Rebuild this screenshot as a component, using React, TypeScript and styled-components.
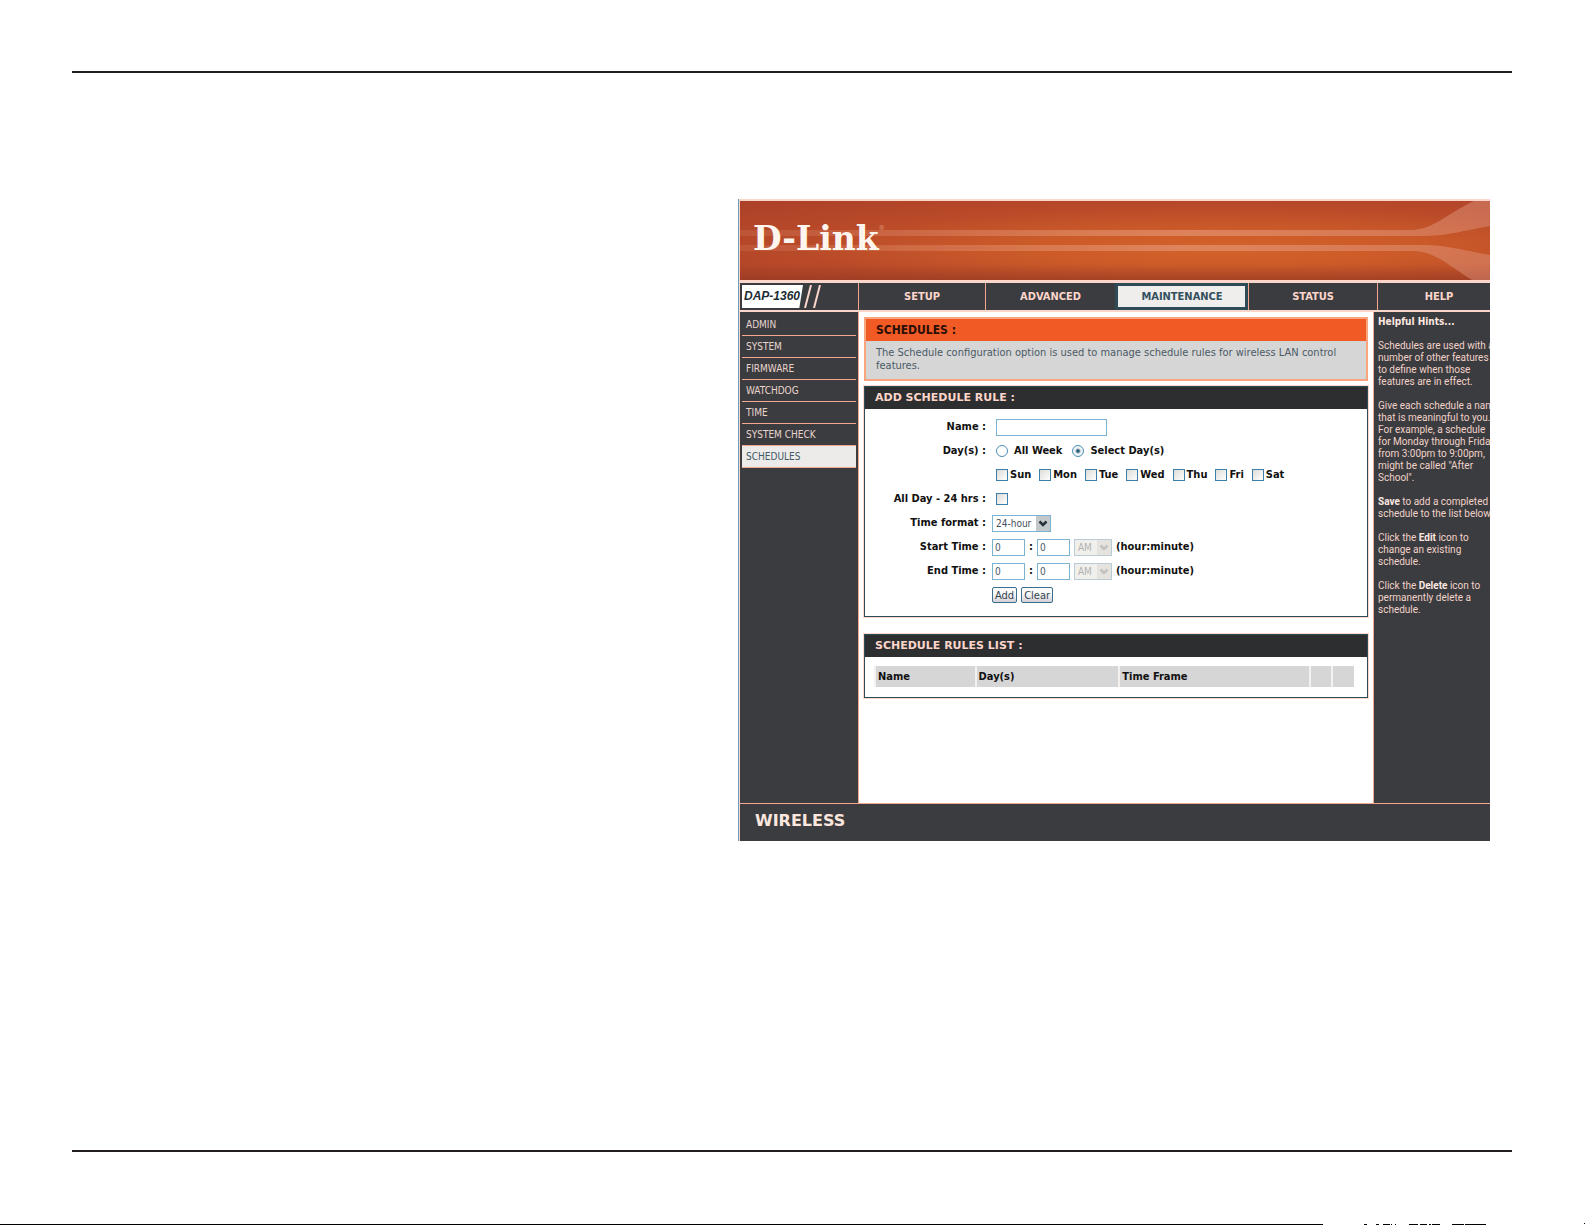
import React, { useState } from "react";
import styled, { createGlobalStyle, css } from "styled-components";

const sans = `"DejaVu Sans Condensed", "DejaVu Sans", Tahoma, sans-serif`;
const wide = `"DejaVu Sans", Verdana, sans-serif`;
const slate = "#3b3c40";
const salmon = "#f4a58f";
const pale = "#fcd6ca";
const teal = "#2d4a57";
const sky = "#79b4d2";

const GlobalStyle = createGlobalStyle`
  *, *::before, *::after { box-sizing: border-box; }
  body { margin: 0; background: #fff; font-family: ${sans}; font-size: 11px; color: #111; }
`;

const Page = styled.div`
  min-height: 100vh;
  display: flex;
  flex-direction: column;
`;

const Sheet = styled.div`
  flex: 1;
  display: flex;
  flex-direction: column;
  margin: 71px 73px 73px 72px;
  border-top: 2px solid #231f20;
  border-bottom: 2px solid #231f20;
`;

const Columns = styled.div`
  display: grid;
  grid-template-columns: 666fr 752fr;
  padding: 126px 22px 0 0;
`;

const Router = styled.div`
  grid-column: 2;
  min-width: 0;
  overflow: hidden;
  border-left: 1px solid #6d9db8;
  background: ${pale};
  padding: 2px 0 0 1px;
`;

const Banner = styled.header`
  position: relative;
  height: 79px;
  display: flex;
  align-items: center;
  padding: 0 0 4px 13px;
  background: radial-gradient(ellipse at 64% 60%, #d3622a 0%, #cb5a29 30%, #b94a29 62%, #ab4029 100%);
`;

const BannerArt = styled.svg`
  position: absolute;
  inset: 0;
  width: 100%;
  height: 100%;
`;

const Logo = styled.div`
  position: relative;
  display: flex;
  font: bold 33px/40px "DejaVu Serif", Georgia, serif;
  color: #fff5ef;
  sup {
    padding-top: 5px;
    font: 7px/8px ${sans};
    color: #e0937a;
  }
`;

const Nav = styled.nav`
  display: grid;
  grid-template-columns: 118px 127fr 130fr 133fr 129fr 113fr;
  margin: 3px 0 2px;
  height: 27px;
  background: ${slate};
  overflow: hidden;
`;

const Model = styled.div`
  display: flex;
  align-items: center;
  padding-left: 2px;
`;

const ModelTag = styled.span`
  height: 23px;
  width: 61px;
  padding-left: 2px;
  background: #fff;
  clip-path: polygon(0 0, 100% 0, 94% 100%, 0 100%);
  color: #1d2c36;
  font: italic bold 12px/23px "Liberation Sans", Arial, sans-serif;
  white-space: nowrap;
`;

const Tab = styled.a<{ $active?: boolean; $clipped?: boolean }>`
  display: flex;
  align-items: center;
  justify-content: center;
  border-left: 1px solid ${salmon};
  color: ${pale};
  font: bold 11px/14px ${sans};
  text-decoration: none;
  ${(p) => p.$clipped && css`padding-left: 10px;`}
  ${(p) =>
    p.$active &&
    css`
      color: #34505f;
      background: #efeeed;
      background-clip: padding-box;
      outline: 3px solid ${teal};
      outline-offset: -3px;
    `}
`;

const Body = styled.div`
  display: grid;
  grid-template-columns: 118px minmax(0, 1fr) 116px;
  min-height: 491px;
  background: #fff;
`;

const Side = styled.ul`
  list-style: none;
  margin: 0;
  padding: 2px;
  background: ${slate};
`;

const SideItem = styled.li<{ $active?: boolean }>`
  height: 22px;
  border-bottom: 1px solid ${salmon};
  background: ${(p) => (p.$active ? "#ecebe9" : "transparent")};
  a {
    display: block;
    padding-left: 4px;
    color: ${(p) => (p.$active ? "#415a68" : "#e9d5ce")};
    font: 10px/21px ${sans};
    text-decoration: none;
  }
`;

const Main = styled.main`
  padding: 5px 5px 0;
  border-left: 1px solid ${salmon};
  border-right: 1px solid ${salmon};
`;

const Intro = styled.section`
  border: 2px solid #f8a57d;
  background: #d6d6d6;
  height: 64px;
  h1 {
    margin: 0;
    padding-left: 10px;
    background: #f15a24;
    color: #2b0f04;
    font: bold 12px/22px ${sans};
  }
  p {
    margin: 0;
    padding: 5px 10px;
    color: #4b5a66;
    font: 11px/13px ${sans};
  }
`;

const Card = styled.section<{ $gap: number }>`
  margin-top: ${(p) => p.$gap}px;
  border: 1px solid ${teal};
  outline: 1px solid ${pale};
  h2 {
    margin: 0;
    padding-left: 10px;
    background: #2d2e30;
    color: ${pale};
    font: bold 11px/22px ${wide};
  }
`;

const Form = styled.form`
  display: grid;
  grid-template-columns: 121px 1fr;
  grid-auto-rows: 24px;
  column-gap: 6px;
  align-items: center;
  padding: 6px 0 9px;
  font: bold 11px/14px ${sans};
`;

const Caption = styled.label`
  grid-column: 1;
  text-align: right;
`;

const Fields = styled.div<{ $inset?: boolean; $gap?: number }>`
  grid-column: 2;
  display: flex;
  align-items: center;
  gap: ${(p) => p.$gap ?? 4}px;
  padding-left: ${(p) => (p.$inset ? 4 : 0)}px;
  white-space: nowrap;
`;

const Choice = styled.label<{ $gap: number }>`
  display: flex;
  align-items: center;
  gap: ${(p) => p.$gap}px;
`;

const TextBox = styled.input<{ $w: number }>`
  width: ${(p) => p.$w}px;
  height: 17px;
  margin: 0;
  padding: 0 2px;
  border: 1px solid ${sky};
  border-radius: 0;
  background: #fff;
  color: #4a5a66;
  font: 10px/15px ${sans};
`;

const Tick = styled.input`
  appearance: none;
  width: 12px;
  height: 12px;
  margin: 0;
  border: 1px solid #3d7fa8;
  background: linear-gradient(135deg, #dcdcd8, #fff);
  &:checked { background: #3d7fa8; }
`;

const Radio = styled.input`
  appearance: none;
  width: 12px;
  height: 12px;
  margin: 0;
  border: 1px solid #4d8fb5;
  border-radius: 50%;
  background: #fff;
  &:checked { background: radial-gradient(circle, #2c5b78 0 1px, #eef4f7 3px); }
`;

const Picker = styled.span<{ $w: number; $off?: boolean }>`
  position: relative;
  width: ${(p) => p.$w}px;
  height: 17px;
  select {
    appearance: none;
    display: block;
    width: 100%;
    height: 17px;
    margin: 0;
    padding: 0 0 0 3px;
    border: 1px solid ${(p) => (p.$off ? "#b9cdd6" : sky)};
    border-radius: 0;
    background: ${(p) => (p.$off ? "#f1efec" : "#fff")};
    color: ${(p) => (p.$off ? "#b0b2b2" : "#44505a")};
    opacity: 1;
    font: 10px/15px ${sans};
  }
  svg {
    position: absolute;
    top: 1px;
    right: 1px;
    width: 14px;
    height: 15px;
    pointer-events: none;
  }
`;

const Push = styled.button`
  height: 16px;
  padding: 0 2px;
  border: 1px solid #3a6f8f;
  border-radius: 2px;
  background: linear-gradient(#fafafa 40%, #d3cfd6);
  color: #33444f;
  font: 11px/13px ${sans};
`;

const ListWrap = styled.div`
  padding: 9px 13px 10px 9px;
`;

const Rules = styled.table`
  width: 100%;
  table-layout: fixed;
  border-collapse: collapse;
  th {
    height: 21px;
    padding: 0 2px;
    background: #d6d6d6;
    border: 0 solid #f4f1ef;
    border-left-width: 2px;
    text-align: left;
    font: bold 11px/14px ${sans};
  }
`;

const Hints = styled.aside`
  overflow: hidden;
  padding: 4px 0 0 4px;
  background: ${slate};
  color: #f1d2c8;
  font: 10px/12px Roboto, ${sans};
  white-space: pre;
  h3, p { margin: 0 0 12px; font-size: 10px; line-height: 12px; }
  h3 { font-family: ${sans}; }
  b, h3 { color: #fde8e0; }
`;

const Foot = styled.footer`
  height: 38px;
  padding-left: 15px;
  border-top: 1px solid ${salmon};
  background: ${slate};
  color: #fbe6de;
  font: bold 16px/34px ${wide};
`;

const Edge = styled.div`
  display: flex;
  align-items: flex-end;
  height: 2px;
  margin-top: -2px;
  svg { display: block; flex: none; }
`;

const EdgeLine = styled.span`
  flex: 1;
  height: 1px;
  background: #000;
`;

const tabs = ["SETUP", "ADVANCED", "MAINTENANCE", "STATUS", "HELP"];
const links = ["ADMIN", "SYSTEM", "FIRMWARE", "WATCHDOG", "TIME", "SYSTEM CHECK", "SCHEDULES"];
const days = ["Sun", "Mon", "Tue", "Wed", "Thu", "Fri", "Sat"];
const specks = [[79, 3], [91, 3], [98, 7], [106, 1], [110, 1], [124, 9], [135, 7], [144, 2], [147, 8], [167, 12], [180, 21]];

function Chevron({ off }: { off?: boolean }) {
  return (
    <svg viewBox="0 0 14 15" aria-hidden="true">
      <rect width="14" height="15" fill={off ? "#e6e3df" : "#c3c8cb"} />
      <path d="M3.5 5.5 7 9l3.5-3.5" fill="none" stroke={off ? "#c2c2c0" : "#26323a"} strokeWidth="2.5" />
    </svg>
  );
}

function TimeRow({ id, label }: { id: string; label: string }) {
  return (
    <>
      <Caption htmlFor={id}>{label} :</Caption>
      <Fields>
        <TextBox id={id} $w={33} defaultValue="0" />
        <span>:</span>
        <TextBox $w={33} defaultValue="0" aria-label={`${label} minute`} />
        <Picker $w={38} $off>
          <select disabled aria-label={`${label} half of day`}>
            <option>AM</option>
            <option>PM</option>
          </select>
          <Chevron off />
        </Picker>
        <span>(hour:minute)</span>
      </Fields>
    </>
  );
}

export default function App() {
  const [mode, setMode] = useState("select");
  return (
    <Page>
      <GlobalStyle />
      <Sheet>
        <Columns>
          <Router>
            <Banner>
              <BannerArt viewBox="0 0 750 79" preserveAspectRatio="none" aria-hidden="true">
                <defs>
                  <linearGradient id="beam" x1="0" x2="1">
                    <stop offset="0" stopColor="#e9a285" stopOpacity="0.15" />
                    <stop offset="0.6" stopColor="#e9a285" stopOpacity="0.55" />
                    <stop offset="1" stopColor="#e0967f" stopOpacity="0.45" />
                  </linearGradient>
                  <linearGradient id="shade" x1="0" x2="0" y1="0" y2="1">
                    <stop offset="0.8" stopColor="#8a3520" stopOpacity="0" />
                    <stop offset="1" stopColor="#8a3520" stopOpacity="0.5" />
                  </linearGradient>
                </defs>
                <rect width="750" height="79" fill="url(#shade)" />
                <path fill="url(#beam)" d="M0 29H672C694 28 705 14 734 0H750V25C722 30 706 35 682 35H0Z" />
                <path fill="url(#beam)" d="M0 44H682C706 44 722 49 750 54V79H732C705 62 694 50 672 50H0Z" />
              </BannerArt>
              <Logo>D-Link<sup>®</sup></Logo>
            </Banner>
            <Nav>
              <Model>
                <ModelTag>DAP-1360</ModelTag>
                <svg width="20" height="23" viewBox="0 0 20 23" aria-hidden="true">
                  <path d="M2 23 8 0M11 23 17 0" stroke={pale} strokeWidth="2" />
                </svg>
              </Model>
              {tabs.map((t) => (
                <Tab key={t} href="#" $active={t === "MAINTENANCE"} $clipped={t === "HELP"}>{t}</Tab>
              ))}
            </Nav>
            <Body>
              <Side>
                {links.map((l) => (
                  <SideItem key={l} $active={l === "SCHEDULES"}><a href="#">{l}</a></SideItem>
                ))}
              </Side>
              <Main>
                <Intro>
                  <h1>SCHEDULES :</h1>
                  <p>The Schedule configuration option is used to manage schedule rules for wireless LAN control features.</p>
                </Intro>
                <Card $gap={5}>
                  <h2>ADD SCHEDULE RULE :</h2>
                  <Form onSubmit={(e) => e.preventDefault()}>
                    <Caption htmlFor="name">Name :</Caption>
                    <Fields $inset><TextBox id="name" $w={111} /></Fields>
                    <Caption as="span">Day(s) :</Caption>
                    <Fields $inset $gap={10}>
                      <Choice $gap={6}>
                        <Radio type="radio" name="mode" checked={mode === "all"} onChange={() => setMode("all")} />
                        All Week
                      </Choice>
                      <Choice $gap={6}>
                        <Radio type="radio" name="mode" checked={mode === "select"} onChange={() => setMode("select")} />
                        Select Day(s)
                      </Choice>
                    </Fields>
                    <Fields $inset $gap={8}>
                      {days.map((d) => (
                        <Choice key={d} $gap={2}><Tick type="checkbox" />{d}</Choice>
                      ))}
                    </Fields>
                    <Caption htmlFor="allday">All Day - 24 hrs :</Caption>
                    <Fields $inset><Tick id="allday" type="checkbox" /></Fields>
                    <Caption htmlFor="format">Time format :</Caption>
                    <Fields>
                      <Picker $w={59}>
                        <select id="format"><option>24-hour</option><option>12-hour</option></select>
                        <Chevron />
                      </Picker>
                    </Fields>
                    <TimeRow id="start" label="Start Time" />
                    <TimeRow id="end" label="End Time" />
                    <Fields>
                      <Push type="submit">Add</Push>
                      <Push type="reset">Clear</Push>
                    </Fields>
                  </Form>
                </Card>
                <Card $gap={17}>
                  <h2>SCHEDULE RULES LIST :</h2>
                  <ListWrap>
                    <Rules>
                      <colgroup>
                        <col style={{ width: "21%" }} />
                        <col style={{ width: "30%" }} />
                        <col />
                        <col style={{ width: "22px" }} />
                        <col style={{ width: "22px" }} />
                      </colgroup>
                      <thead>
                        <tr>
                          <th>Name</th>
                          <th>Day(s)</th>
                          <th>Time Frame</th>
                          <th />
                          <th />
                        </tr>
                      </thead>
                    </Rules>
                  </ListWrap>
                </Card>
              </Main>
              <Hints>
                <h3>Helpful Hints...</h3>
                <p>{"Schedules are used with a\nnumber of other features\nto define when those\nfeatures are in effect."}</p>
                <p>{"Give each schedule a name\nthat is meaningful to you.\nFor example, a schedule\nfor Monday through Friday\nfrom 3:00pm to 9:00pm,\nmight be called \"After\nSchool\"."}</p>
                <p><b>Save</b>{" to add a completed\nschedule to the list below."}</p>
                <p>Click the <b>Edit</b>{" icon to\nchange an existing\nschedule."}</p>
                <p>Click the <b>Delete</b>{" icon to\npermanently delete a\nschedule."}</p>
              </Hints>
            </Body>
            <Foot>WIRELESS</Foot>
          </Router>
        </Columns>
      </Sheet>
      <Edge>
        <EdgeLine />
        <svg width="262" height="2" viewBox="-38 0 262 2" shapeRendering="crispEdges" aria-hidden="true">
          {specks.map(([x, w]) => <rect key={x} x={x - 76} y="1" width={w} height="1" />)}
          <rect x="223" y="0" width="1" height="1" />
        </svg>
      </Edge>
    </Page>
  );
}
